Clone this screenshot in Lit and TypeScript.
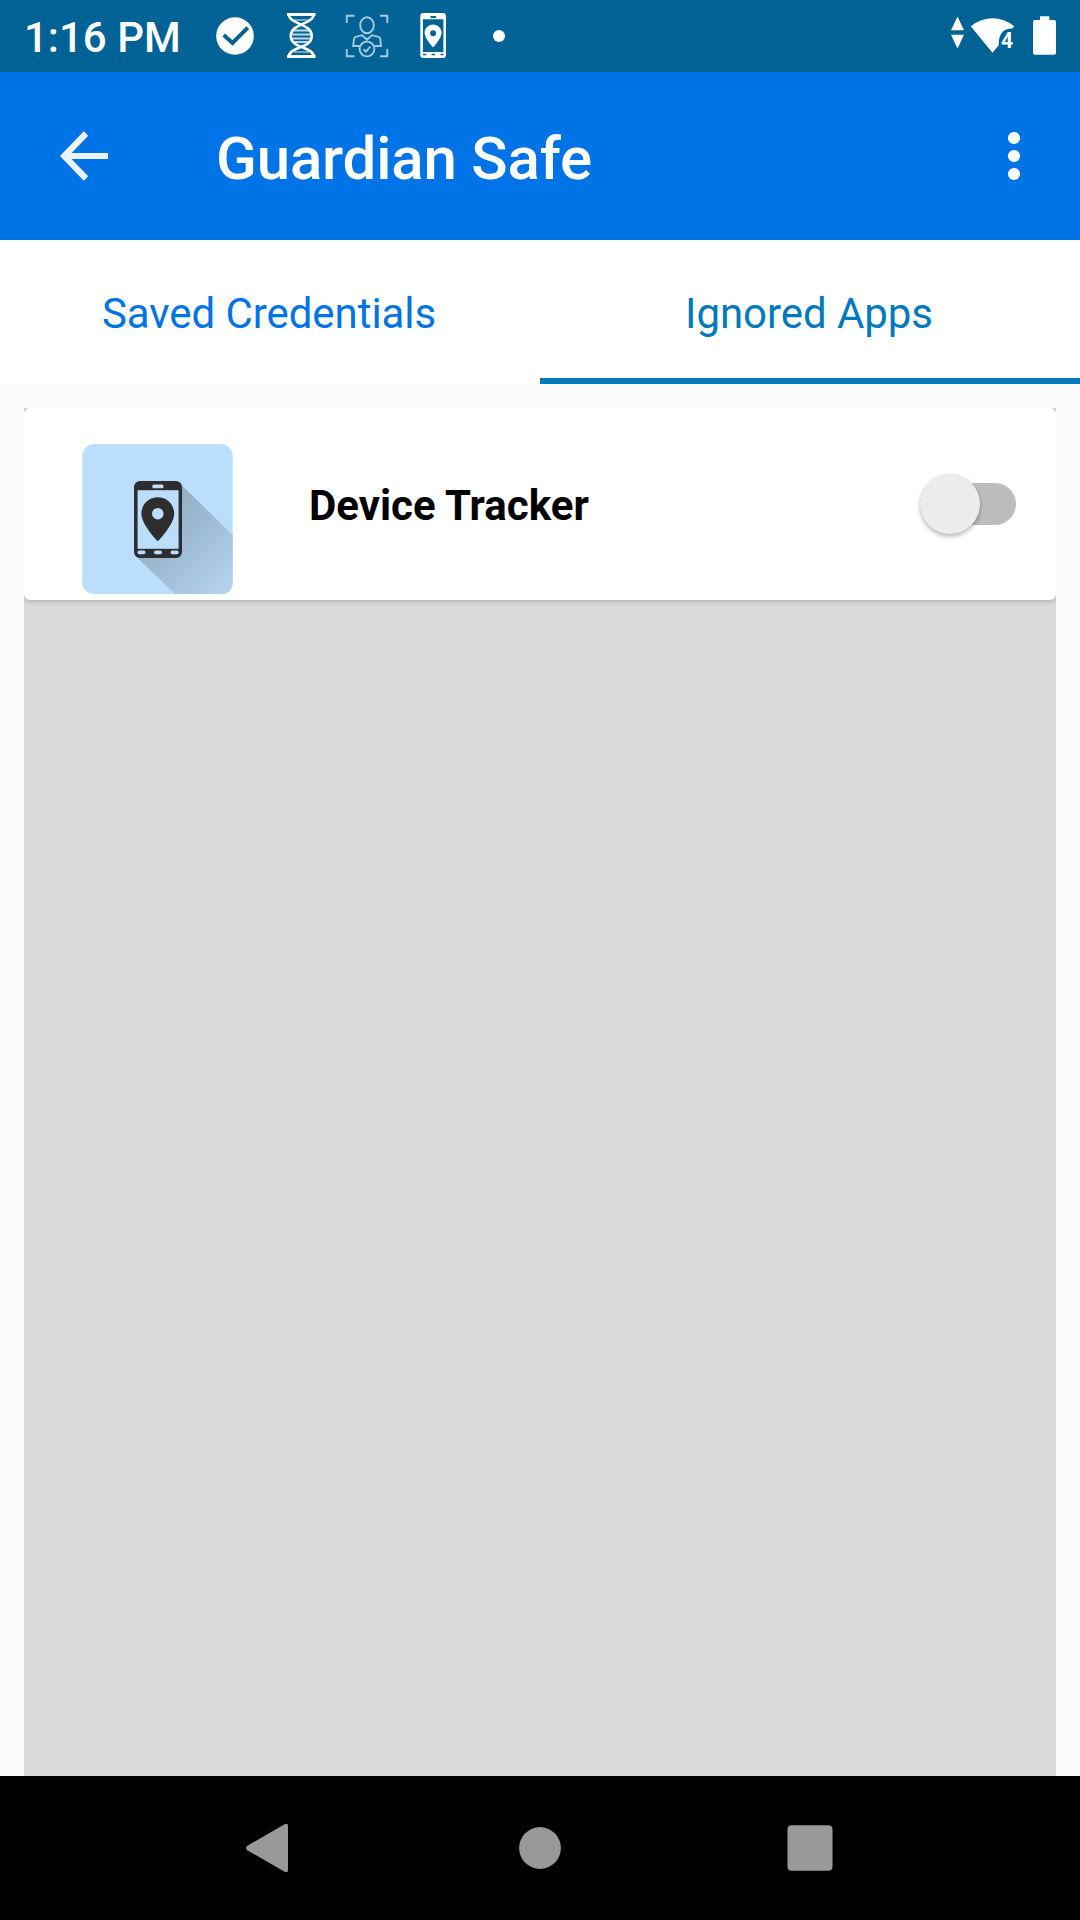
import { LitElement, html, css, svg } from "lit";
import { customElement, property, state } from "lit/decorators.js";

@customElement("status-bar")
class StatusBar extends LitElement {
  static styles = css`
    :host {
      display: flex;
      align-items: center;
      height: 72px;
      background: #006295;
      color: #fff;
    }
    .clock {
      box-sizing: border-box;
      width: 202px;
      padding: 4px 0 0 24px;
      font-size: 42px;
      font-weight: 500;
      line-height: 48px;
      white-space: nowrap;
    }
    .icon {
      display: block;
      flex: none;
      width: 66px;
      height: 72px;
    }
    .system {
      display: block;
      width: 140px;
      height: 72px;
      margin-left: auto;
    }
    .digit {
      font: 700 22.5px Roboto, sans-serif;
    }
  `;
  render() {
    return html`
      <div class="clock">1:16 PM</div>
      <svg class="icon" viewBox="0 0 66 72">
        <circle cx="33" cy="36" r="18.8" fill="#fff" />
        <path d="M21.8 35 L30.5 43 L45.8 27.6" fill="none" stroke="#006295" stroke-width="4" />
      </svg>
      <svg class="icon" viewBox="0 0 66 72" fill="none" stroke="#fff">
        <path d="M19 13H47.5V16H19ZM19 55H47.5V58H19Z" fill="#fff" stroke="none" />
        <path
          d="M20.6 14C21.5 25 43.5 23 43.8 36C43.5 49 21.5 46 20.6 57M45.9 14C45 25 23 23 22.7 36C23 49 45 46 45.9 57"
          stroke-width="2.6"
        />
        <path d="M26 20H41M26 52H41" stroke-width="1.4" opacity=".6" />
        <path d="M26 30.5H41M24 34.5H43M24 38.5H43M26 42H41" stroke-width="1.8" opacity=".75" />
      </svg>
      <svg class="icon" viewBox="0 0 66 72" fill="none" stroke="#a4cbe0" stroke-width="1.9">
        <path d="M12.8 23V15.8H20.5M46 15.8H53.3V23M53.3 49V56.2H46M20.5 56.2H12.8V49" />
        <ellipse cx="33" cy="25.2" rx="6.8" ry="8" />
        <path d="M25.5 46H19.2L20 39.2Q20.3 37 22.5 36.6L28.2 35.2L33 39.8L37.8 35.2L43.5 36.6Q46 37 46.3 39.2L47 46H40.8" />
        <circle cx="33" cy="49" r="7.4" />
        <path d="M29.4 49.2L32 51.6L36.3 46.5" />
      </svg>
      <svg class="icon" viewBox="0 0 66 72" fill="#fff">
        <path
          fill-rule="evenodd"
          d="M23.3 13H43Q46 13 46 16V55Q46 58 43 58H23.3Q20.3 58 20.3 55V16Q20.3 13 23.3 13ZM22.9 19.2V52H43.4V19.2ZM30.5 16V18H36V16ZM23 53.8V55.3H26V53.8ZM31.5 53.8V55.3H35V53.8ZM40.5 53.8V55.3H43.5V53.8Z"
        />
        <path
          fill-rule="evenodd"
          d="M33.1 24.5C28.2 24.5 24.6 28.2 24.6 32.8C24.6 38.5 33.1 47.5 33.1 47.5S41.6 38.5 41.6 32.8C41.6 28.2 38 24.5 33.1 24.5ZM33.1 30.2A3 3 0 1 1 33.1 36.2A3 3 0 1 1 33.1 30.2Z"
        />
      </svg>
      <svg class="icon" viewBox="0 0 66 72"><circle cx="33" cy="36" r="6" fill="#fff" /></svg>
      <svg class="system" viewBox="0 0 140 72" fill="#fff">
        <path d="M17.5 16.5L24 30.3H11ZM11 34.8H24L17.5 48.5Z" />
        <path d="M30.7 26.2Q41 18.2 52.5 18.2T74.3 26.2L72.3 28.6C63 28.6 58.7 34 58.7 45.3L52.5 52.8Z" />
        <text class="digit" x="60.9" y="47.8" textLength="12" lengthAdjust="spacingAndGlyphs">4</text>
        <path d="M100 16.2H109.3V20H114Q116 20 116 22V52.5Q116 54.7 114 54.7H95Q93 54.7 93 52.5V22Q93 20 95 20H100Z" />
      </svg>
    `;
  }
}

@customElement("app-bar")
class AppBar extends LitElement {
  @property() heading = "";
  static styles = css`
    :host {
      display: flex;
      align-items: center;
      height: 168px;
      background: #0073e6;
      color: #fff;
    }
    .back {
      display: block;
      width: 168px;
      height: 168px;
    }
    .title {
      flex: 1;
      margin: 0;
      padding: 5px 0 0 48px;
      font-size: 60px;
      font-weight: 500;
      line-height: 72px;
      letter-spacing: -0.18px;
    }
    .more {
      display: block;
      width: 120px;
      height: 168px;
    }
  `;
  render() {
    return html`
      <svg class="back" viewBox="0 0 168 168">
        <path d="M108 84H66M86 61.5L64.3 84L86 106.5" fill="none" stroke="#eaf2fd" stroke-width="6.2" />
      </svg>
      <h1 class="title">${this.heading}</h1>
      <svg class="more" viewBox="0 0 120 168" fill="#fff">
        ${[66, 84, 102].map((y) => svg`<circle cx="54" cy=${y} r="6.1" />`)}
      </svg>
    `;
  }
}

@customElement("app-switch")
class AppSwitch extends LitElement {
  static styles = css`
    :host {
      display: flex;
      align-items: center;
      box-sizing: border-box;
      width: 96px;
      height: 60px;
    }
    .track {
      display: flex;
      align-items: center;
      width: 84px;
      height: 42px;
      margin-left: 12px;
      border-radius: 21px;
      background: #bdbdbd;
    }
    .thumb {
      flex: none;
      width: 60px;
      height: 60px;
      margin-left: -12px;
      border-radius: 50%;
      background: #ececec;
      box-shadow: 0 3px 4px rgba(0, 0, 0, 0.24), 0 0 2px rgba(0, 0, 0, 0.12);
    }
  `;
  render() {
    return html`<div class="track"><div class="thumb"></div></div>`;
  }
}

@customElement("app-row")
class AppRow extends LitElement {
  @property() name = "";
  static styles = css`
    :host {
      display: flex;
      box-sizing: border-box;
      height: 192px;
      padding: 36px 40px 0 58px;
      border-radius: 6px;
      background: #fff;
      box-shadow: 0 2px 6px rgba(0, 0, 0, 0.16), 0 0 3px rgba(0, 0, 0, 0.1);
    }
    .tile {
      display: block;
      flex: none;
      width: 151px;
      height: 150px;
    }
    .name {
      flex: 1;
      padding: 38px 0 0 76px;
      font-size: 42px;
      font-weight: 700;
      line-height: 48px;
      color: #000;
    }
    .toggle {
      margin-top: 30px;
    }
  `;
  render() {
    return html`
      <svg class="tile" viewBox="0 0 151 150">
        <defs>
          <linearGradient id="shade" gradientUnits="userSpaceOnUse" x1="76" y1="75" x2="145" y2="144">
            <stop offset="0" stop-color="#94aec4" />
            <stop offset="1" stop-color="#b1d2ef" />
          </linearGradient>
        </defs>
        <rect x=".3" width="150.4" height="150" rx="12" fill="#badefb" />
        <path d="M99.5 41L150.7 91V138Q150.7 150 138.7 150H93L53.5 112Z" fill="url(#shade)" />
        <rect x="52" y="37" width="48" height="77" rx="6" fill="#2e2e2e" />
        <rect x="55.6" y="46.2" width="41" height="58.6" fill="#badefb" />
        <g fill="#badefb">
          <rect x="70.3" y="40.4" width="11.2" height="3.8" rx="1.5" />
          <rect x="55.5" y="106.5" width="8" height="3.8" rx="1.7" />
          <rect x="72" y="106.5" width="8" height="3.8" rx="1.7" />
          <rect x="88.6" y="106.5" width="8" height="3.8" rx="1.7" />
        </g>
        <path
          fill="#2e2e2e"
          fill-rule="evenodd"
          d="M75.8 53.2C66.5 53.2 59.4 60.4 59.4 69.5C59.4 81 75.8 97.3 75.8 97.3S92.2 81 92.2 69.5C92.2 60.4 85.1 53.2 75.8 53.2ZM75.8 63.9A5.8 5.8 0 1 1 75.8 75.5A5.8 5.8 0 1 1 75.8 63.9Z"
        />
      </svg>
      <div class="name">${this.name}</div>
      <app-switch class="toggle"></app-switch>
    `;
  }
}

@customElement("nav-bar")
class NavBar extends LitElement {
  static styles = css`
    :host {
      display: flex;
      justify-content: center;
      height: 144px;
      background: #000;
    }
    .key {
      display: block;
      width: 270px;
      height: 144px;
    }
  `;
  render() {
    return html`
      <svg class="key" viewBox="0 0 270 144" fill="#999">
        <path d="M112.3 69.8L149.6 48.2Q153 46.8 153 50V94Q153 97.2 149.6 95.8L112.3 74.2Q109.7 72 112.3 69.8Z" />
      </svg>
      <svg class="key" viewBox="0 0 270 144" fill="#999"><circle cx="135" cy="72" r="20.9" /></svg>
      <svg class="key" viewBox="0 0 270 144" fill="#999">
        <rect x="112.5" y="49.3" width="45" height="45.4" rx="4" />
      </svg>
    `;
  }
}

@customElement("app-root")
class AppRoot extends LitElement {
  @state() private tabs = [
    { label: "Saved Credentials", active: false },
    { label: "Ignored Apps", active: true },
  ];
  @state() private apps = ["Device Tracker"];

  static styles = css`
    :host {
      display: flex;
      flex-direction: column;
      width: 1080px;
      height: 1920px;
      overflow: hidden;
      background: #fafafa;
      font-family: Roboto, sans-serif;
    }
    .tabs {
      display: grid;
      grid-template-columns: 1fr 1fr;
      height: 144px;
      background: #fff;
    }
    .tab {
      box-sizing: border-box;
      padding: 50px 2px 0 0;
      border-bottom: 6px solid transparent;
      font-size: 42px;
      line-height: 48px;
      letter-spacing: -0.06px;
      text-align: center;
      color: #0073e6;
    }
    .active {
      border-color: #007abc;
      color: #007abc;
    }
    .list {
      flex: 1;
      margin: 24px 24px 0;
      overflow: hidden;
      background: #dbdbdb;
    }
  `;
  render() {
    return html`
      <status-bar></status-bar>
      <app-bar heading="Guardian Safe"></app-bar>
      <div class="tabs">
        ${this.tabs.map((t) => html`<div class="tab ${t.active ? "active" : ""}">${t.label}</div>`)}
      </div>
      <div class="list">${this.apps.map((a) => html`<app-row name=${a}></app-row>`)}</div>
      <nav-bar></nav-bar>
    `;
  }
}
